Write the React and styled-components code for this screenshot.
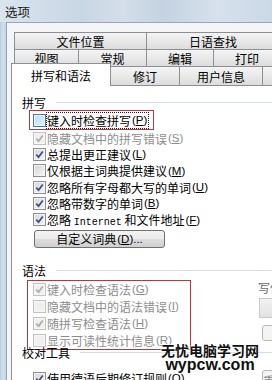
import styled, { createGlobalStyle } from 'styled-components';

const GlobalStyle = createGlobalStyle`
  html, body { margin: 0; padding: 0; background: #fff; }
  body { font-family: "Noto Sans CJK SC", "Noto Sans", sans-serif; }
`;

const Screen = styled.div`
  position: relative;
  width: 272px;
  height: 380px;
  overflow: hidden;
  display: flex;
  flex-direction: column;
  font-family: "Noto Sans CJK SC", "Noto Sans", sans-serif;
  font-size: 12px;
  color: #000;
`;

const TitleBar = styled.div`
  flex: none;
  height: 22px;
  display: flex;
  align-items: center;
  padding-left: 5px;
  font-size: 12.5px;
  color: #1b1b1b;
  background: linear-gradient(90deg, #d9e4ef 0%, #c9d6e4 30%, #d3dee9 45%, #c4d2e1 60%, #d6e1ec 80%, #cbd8e6 100%);
`;

const Body = styled.div`
  flex: 1;
  display: flex;
  min-height: 0;
`;

const Frame = styled.div`
  flex: none;
  width: 6px;
  background: linear-gradient(90deg, #b7cae0, #d4e1ee 50%, #c0d1e4);
`;

const Dialog = styled.div`
  flex: none;
  width: 460px;
  display: flex;
  flex-direction: column;
  padding-top: 9px;
  background: #f4f5f6;
  border-top: 1px solid #9ea7b1;
  border-left: 1px solid #9ea7b1;
`;

const TabRow = styled.div`
  display: flex;
  align-items: flex-end;
  height: ${p => p.$height || 17}px;
  padding-left: ${p => p.$inset}px;
  margin-top: ${p => p.$lift || 0}px;
`;

const Tab = styled.div`
  box-sizing: border-box;
  flex: none;
  width: ${p => p.$w}px;
  height: ${p => p.$h || 17}px;
  display: flex;
  align-items: center;
  justify-content: center;
  border: 1px solid #8c8f96;
  border-bottom: none;
  background: linear-gradient(180deg, #f4f4f4 0%, #e9e9e9 50%, #dcdcdc 100%);
  & + & { margin-left: -1px; }
`;

const ActiveTab = styled(Tab)`
  position: relative;
  z-index: 2;
  height: 23px;
  margin-bottom: -1px;
  background: #fff;
`;

const Panel = styled.div`
  flex: 1;
  margin-left: 4px;
  display: flex;
  flex-direction: column;
  background: #fff;
  border-top: 1px solid #8c8f96;
  border-left: 1px solid #8c8f96;
`;

const GroupHeader = styled.div`
  display: flex;
  align-items: center;
  height: ${p => p.$h || 15}px;
  margin-top: ${p => p.$top}px;
  padding-left: 10px;
  &::after {
    content: "";
    flex: 1;
    height: 1px;
    margin-left: 10px;
    background: #d5dfe5;
  }
`;

const List = styled.div`
  display: flex;
  flex-direction: column;
  padding-left: 21px;
`;

const RedBox = styled.div`
  box-sizing: border-box;
  width: ${p => p.$w}px;
  border: 1px solid #b4383c;
  display: flex;
  flex-direction: column;
  padding-left: ${p => p.$pad}px;
  margin-left: ${p => p.$shift || 0}px;
`;

const Row = styled.div`
  display: flex;
  align-items: center;
  flex: none;
  height: ${p => p.$h || 16.3}px;
  color: ${p => (p.$disabled ? '#8d8d8d' : '#000')};
  white-space: nowrap;
`;

const Box = styled.span`
  box-sizing: border-box;
  flex: none;
  width: 13px;
  height: 13px;
  margin-right: 1px;
  display: flex;
  align-items: center;
  justify-content: center;
  border: 1px solid ${p => (p.$disabled ? '#c2c2c2' : p.$hot ? '#3d7bad' : '#8e8f8f')};
  box-shadow: inset 0 0 0 1px ${p => (p.$disabled ? '#f7f7f7' : '#f4f4f4')};
  background: ${p =>
    p.$disabled
      ? '#f0f0f0'
      : p.$hot
        ? 'linear-gradient(135deg, #b9ddf5, #e3f2fc)'
        : 'linear-gradient(135deg, #d6d6d6, #f6f6f6)'};
`;

const Focus = styled.span`
  display: inline-flex;
  align-items: center;
  outline: 1px dotted #222;
  outline-offset: 0;
  padding: 0 1px 0 0;
  line-height: 15px;
`;

const Acc = styled.span`
  font-family: "Liberation Sans", Arial, sans-serif;
  font-size: 11.5px;
  margin-left: 1px;
  & u { text-underline-offset: 1px; }
`;

const Mono = styled.span`
  font-family: "Liberation Mono", "DejaVu Sans Mono", monospace;
  font-size: 10px;
`;

const Button = styled.div`
  box-sizing: border-box;
  flex: none;
  width: ${p => p.$w}px;
  height: ${p => p.$h}px;
  margin-top: ${p => p.$top || 0}px;
  margin-left: ${p => p.$left || 0}px;
  display: flex;
  align-items: center;
  justify-content: center;
  border: 1px solid ${p => (p.$disabled ? '#b4b8bc' : '#707070')};
  border-radius: 3px;
  color: ${p => (p.$disabled ? '#8d8d8d' : '#000')};
  background: ${p =>
    p.$disabled
      ? '#f4f4f4'
      : 'linear-gradient(180deg, #f3f3f3 0%, #ebebeb 48%, #dddddd 52%, #cfcfcf 100%)'};
`;

const Section = styled.div`
  display: flex;
  align-items: flex-start;
  margin-top: ${p => p.$top || 0}px;
  padding-left: ${p => p.$pad}px;
`;

const Side = styled.div`
  display: flex;
  flex-direction: column;
  margin-left: 67px;
  width: 120px;
  color: #6a6a6a;
`;

const SideLabel = styled.div`
  height: 16px;
  display: flex;
  align-items: center;
`;

const Select = styled.div`
  box-sizing: border-box;
  width: 120px;
  height: 20px;
  margin-top: 2px;
  margin-left: 1px;
  border: 1px solid #c9c9c9;
  background: linear-gradient(180deg, #f2f2f2, #e2e2e2);
`;

const Slot = styled.div`
  display: flex;
  width: ${p => p.$w}px;
`;

const Watermark = styled.div`
  position: absolute;
  left: 161px;
  top: 342px;
  display: flex;
  flex-direction: column;
  align-items: center;
  color: #111;
  font-weight: 700;
  text-shadow: 0 0 2px #fff, 0 0 2px #fff, 0 0 3px #fff;
`;

const MarkCn = styled.div`
  font-family: "Noto Sans CJK SC", sans-serif;
  font-size: 14px;
  line-height: 16px;
  letter-spacing: 0;
`;

const MarkEn = styled.div`
  font-family: "Liberation Sans", Arial, sans-serif;
  font-size: 16px;
  line-height: 13px;
`;

const Check = ({ checked, disabled, hot }) => (
  <Box $disabled={disabled} $hot={hot}>
    {checked && (
      <svg width="9" height="9" viewBox="0 0 9 9">
        <path
          d="M1.3 4.6 L3.6 7.1 L7.8 1.6"
          fill="none"
          stroke={disabled ? '#adadad' : '#3f4f86'}
          strokeWidth="1.7"
        />
      </svg>
    )}
  </Box>
);

const Option = ({ label, k, checked, disabled, h }) => (
  <Row $disabled={disabled} $h={h}>
    <Check checked={checked} disabled={disabled} />
    <span>{label}</span>
    <Acc>(<u>{k}</u>)</Acc>
  </Row>
);

const spelling = [
  { label: '隐藏文档中的拼写错误', k: 'S', checked: true, disabled: true },
  { label: '总提出更正建议', k: 'L', checked: true },
  { label: '仅根据主词典提供建议', k: 'M', checked: false },
  { label: '忽略所有字母都大写的单词', k: 'U', checked: true },
  { label: '忽略带数字的单词', k: 'B', checked: true },
  { label: <>忽略 <Mono>Internet</Mono> 和文件地址</>, k: 'F', checked: true },
];

const grammar = [
  { label: '键入时检查语法', k: 'G', checked: true },
  { label: '隐藏文档中的语法错误', k: 'I', checked: false },
  { label: '随拼写检查语法', k: 'H', checked: true },
  { label: '显示可读性统计信息', k: 'R', checked: false },
];

export default function App() {
  return (
    <Screen>
      <GlobalStyle />
      <TitleBar>选项</TitleBar>
      <Body>
        <Frame />
        <Dialog>
          <TabRow $inset={7}>
            <Tab $w={133}>文件位置</Tab>
            <Tab $w={134}>日语查找</Tab>
          </TabRow>
          <TabRow $inset={7}>
            <Tab $w={65}>视图</Tab>
            <Tab $w={69}>常规</Tab>
            <Tab $w={68}>编辑</Tab>
            <Tab $w={68}>打印</Tab>
          </TabRow>
          <TabRow $inset={4} $height={22} $lift={-3}>
            <ActiveTab $w={100}>拼写和语法</ActiveTab>
            <Tab $w={70} $h={19}>修订</Tab>
            <Tab $w={84} $h={19}>用户信息</Tab>
            <Tab $w={85} $h={19}>高级</Tab>
          </TabRow>
          <Panel>
            <GroupHeader $top={9}>拼写</GroupHeader>
            <List>
              <RedBox $w={125} $pad={3} $shift={-4}>
                <Row $h={18}>
                  <Check hot />
                  <Focus>
                    键入时检查拼写<Acc>(<u>P</u>)</Acc>
                  </Focus>
                </Row>
              </RedBox>
              {spelling.map(o => (
                <Option key={o.k} {...o} />
              ))}
              <Button $w={131} $h={18} $top={2} $left={1}>
                自定义词典<Acc>(<u>D</u>)...</Acc>
              </Button>
            </List>
            <GroupHeader $top={15} $h={16}>语法</GroupHeader>
            <Section $top={1} $pad={15}>
              <RedBox $w={164} $pad={5}>
                {grammar.map(o => (
                  <Option key={o.k} {...o} disabled h={17} />
                ))}
              </RedBox>
              <Side>
                <SideLabel>写作风格(W):</SideLabel>
                <Select />
                <Button $w={90} $h={16} $top={7} $left={4} $disabled>设置(T)...</Button>
              </Side>
            </Section>
            <GroupHeader $top={-3} $h={12}>校对工具</GroupHeader>
            <Section $top={11} $pad={21}>
              <Slot $w={229}>
                <Option label="使用德语后期修订规则" k="O" checked h={17} />
              </Slot>
              <Button $w={90} $h={22} $disabled>重新检查文档(K)</Button>
            </Section>
          </Panel>
        </Dialog>
      </Body>
      <Watermark>
        <MarkCn>无忧电脑学习网</MarkCn>
        <MarkEn>wypcw.com</MarkEn>
      </Watermark>
    </Screen>
  );
}
